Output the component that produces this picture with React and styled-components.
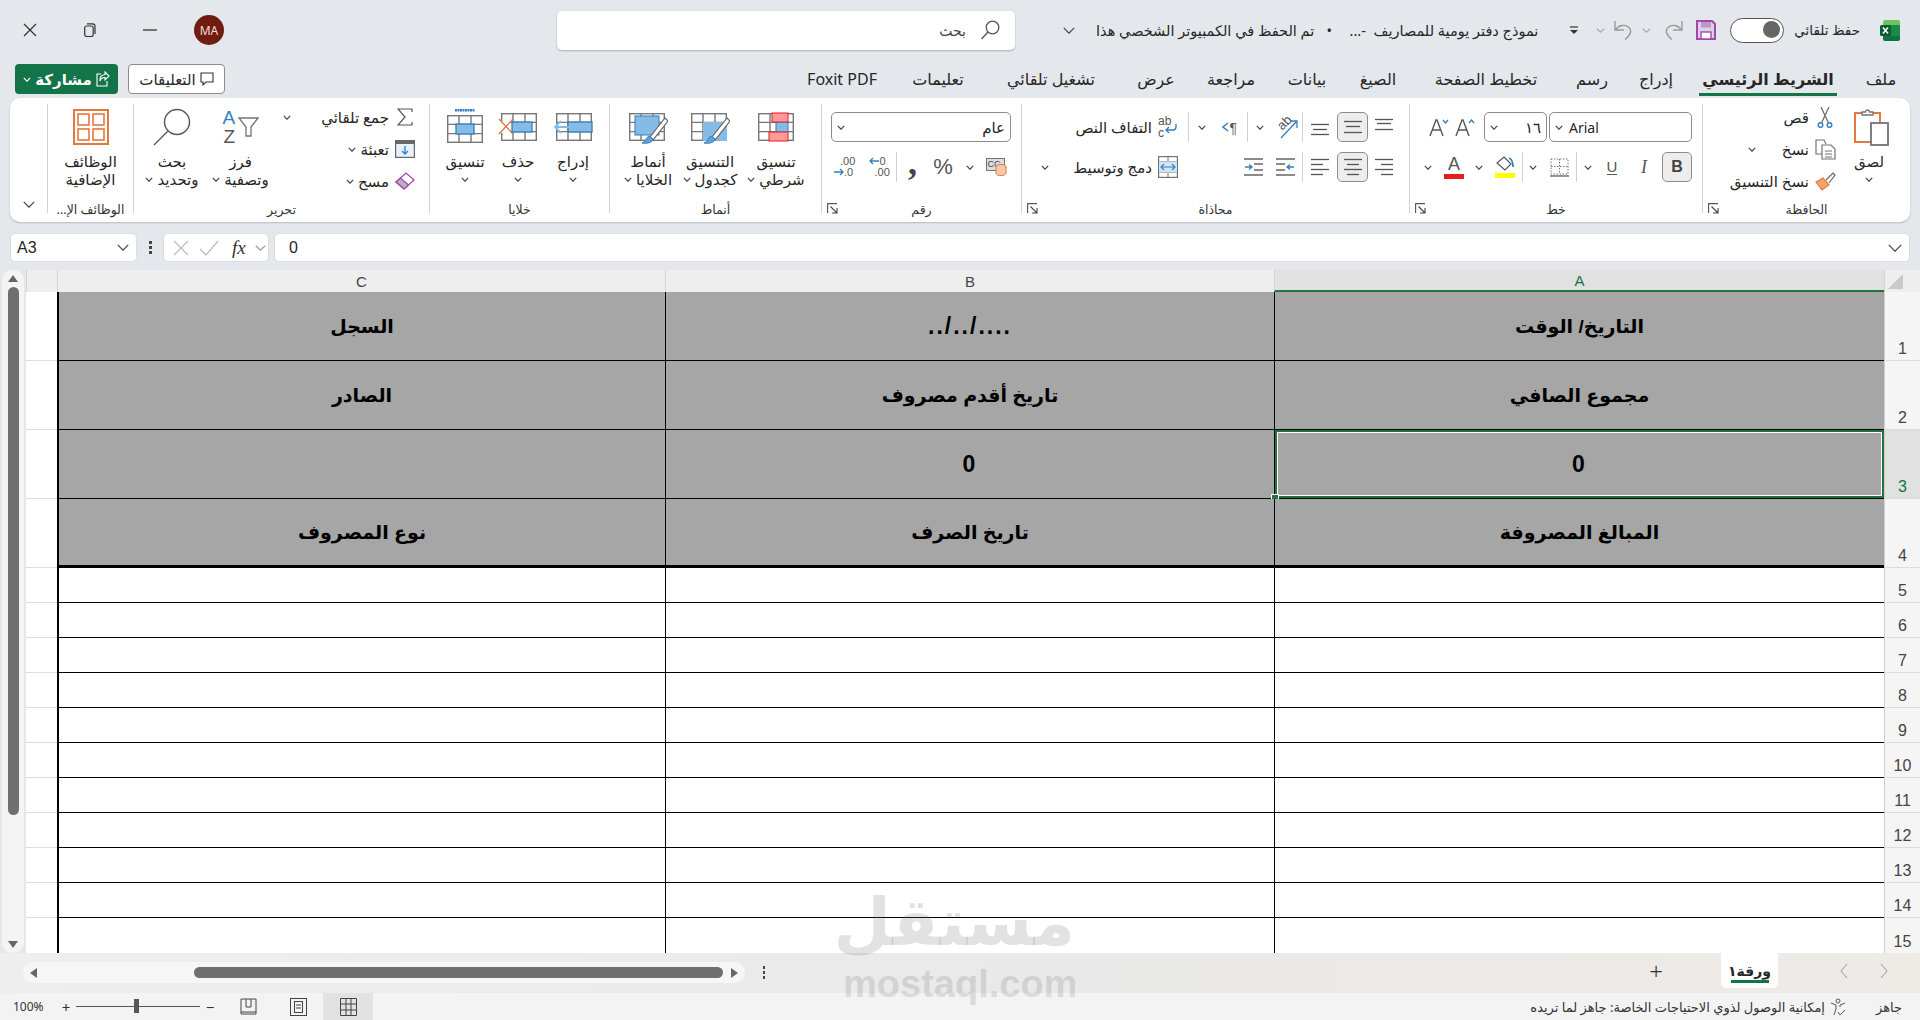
import React from "react";
import styled, { createGlobalStyle } from "styled-components";

const UI = `"Noto Sans", "DejaVu Sans", sans-serif`;
const ARIAL = `"Liberation Sans", "DejaVu Sans", sans-serif`;

const GREY = "#737373";
const BLUE = "#2f7fc1";
const SKY = "#86bbe6";
const ORANGE = "#e2793f";

const GlobalStyle = createGlobalStyle`
  html, body { margin: 0; padding: 0; background: #e4e8ed; }
  body { width: 1920px; height: 1020px; overflow: hidden; font-family: ${UI}; color: #262626; }
  * { box-sizing: border-box; }
`;

/* ---------- icons ---------- */

const Svg = styled.svg`
  display: block;
  flex: none;
`;

const I = ({ w, h, children }) => (
  <Svg width={w} height={h} viewBox={`0 0 ${w} ${h}`} fill="none">
    {children}
  </Svg>
);

const Chev = ({ w = 8, h = 5, c = "#444" }) => (
  <I w={w} h={h}>
    <path d={`M.8.8 ${w / 2} ${h - 0.8} ${w - 0.8}.8`} stroke={c} strokeWidth="1.2" />
  </I>
);

const CloseIcon = () => <I w={14} h={14}><path d="M1 1l12 12M13 1 1 13" stroke="#333" strokeWidth="1.2" /></I>;
const RestoreIcon = () => <I w={12} h={14}><rect x=".7" y="3" width="8.5" height="10.5" rx="2" stroke="#333" strokeWidth="1.2" /><path d="M3 .8h5.5a2.5 2.5 0 0 1 2.5 2.5V11" stroke="#333" strokeWidth="1.2" /></I>;
const MinIcon = () => <I w={14} h={2}><path d="M0 1h14" stroke="#333" strokeWidth="1.3" /></I>;
const SearchIcon = () => <I w={20} h={20}><circle cx="12.5" cy="7.5" r="6.3" stroke="#555" strokeWidth="1.3" /><path d="M8 12 1.5 19" stroke="#555" strokeWidth="1.4" /></I>;

const ExcelLogo = () => (
  <I w={20} h={21}>
    <rect x="3" y="0" width="17" height="11" rx="2" fill="#6fc15c" />
    <rect x="3" y="10" width="17" height="11" rx="2" fill="#10703f" />
    <rect x="9" y="5" width="11" height="11" fill="#1a8a4c" />
    <rect x="0" y="5" width="11" height="11" rx="1.5" fill="#0b5c33" />
    <path d="M3 7.6l5 6M8 7.6l-5 6" stroke="#fff" strokeWidth="1.5" />
  </I>
);

const SaveIcon = () => (
  <I w={20} h={20}>
    <path d="M1 1h15l3 3v15H1z" fill="#d9d4e4" stroke="#a347ab" strokeWidth="2" />
    <rect x="5" y="1.5" width="10" height="6" fill="#a347ab" opacity=".45" />
    <rect x="5" y="12" width="10" height="7" fill="#fff" stroke="#a347ab" strokeWidth="1.4" />
  </I>
);
const UndoIcon = () => <I w={20} h={20}><path d="M2 1v9h9M2.5 10C6 5 12 4 16 7.5c3 3 2 7-4 12" stroke="#999" strokeWidth="1.4" /></I>;
const RedoIcon = () => <I w={20} h={20}><path d="M18 1v9H9M17.5 10C14 5 8 4 4 7.5c-3 3-2 7 4 12" stroke="#999" strokeWidth="1.4" /></I>;
const CustomizeIcon = () => <I w={10} h={9}><path d="M1 1h8" stroke="#333" strokeWidth="1.2" /><path d="M1 4l4 4 4-4z" fill="#333" /></I>;

const CommentIcon = () => <I w={14} h={14}><path d="M1 1h12v9H6l-3 3v-3H1z" stroke="#333" strokeWidth="1.1" /></I>;
const ShareIcon = () => <I w={14} h={16}><path d="M9 1l4 4-4 4V6.5C6 6.5 4.5 8 4 10c-.3-3 1-6 5-6.5zM5 3H1v12h10v-5" stroke="#fff" strokeWidth="1.1" /></I>;

const PasteIcon = () => (
  <I w={42} h={38}>
    <g transform="translate(6 0)">
      <rect x="1" y="5" width="25" height="29" fill="#fff" stroke={ORANGE} strokeWidth="2" />
      <path d="M8 7V4h3.5a2 2 0 0 1 4 0H19v3z" fill="#fff" stroke={GREY} strokeWidth="1.3" />
      <rect x="17" y="15" width="17" height="22" fill="#fff" stroke={GREY} strokeWidth="1.8" />
    </g>
  </I>
);
const CutIcon = () => (
  <I w={16} h={21}>
    <path d="M12 0 4.5 16M4 0l7.5 16" stroke="#666" strokeWidth="1.2" />
    <circle cx="3.5" cy="18" r="2.3" stroke={BLUE} strokeWidth="1.4" />
    <circle cx="12.5" cy="18" r="2.3" stroke={BLUE} strokeWidth="1.4" />
  </I>
);
const CopyIcon = () => (
  <I w={21} h={21}>
    <path d="M9 15H1V1h8l2 4" stroke={GREY} strokeWidth="1.2" />
    <path d="M7 6h9l4 4v10H7z" fill="#fff" stroke={GREY} strokeWidth="1.2" />
    <path d="M10 12h7M10 15h7M10 18h7" stroke={GREY} />
  </I>
);
const PainterIcon = () => (
  <I w={21} h={19}>
    <path d="M1 10l7-4 6 7-7 5z" fill="#f2a56f" stroke={ORANGE} strokeWidth="1.2" />
    <path d="M11 8l7-7 2 2-6 8" fill="#fff" stroke="#666" strokeWidth="1.2" />
  </I>
);

const Launcher = ({ className }) => (
  <Svg className={className} width="11" height="11" viewBox="0 0 11 11" fill="none">
    <path d="M.6 10V.6H10" stroke="#555" strokeWidth="1.1" />
    <path d="M3.5 3.5 10 10M10 5v5H5" stroke="#444" strokeWidth="1.1" />
  </Svg>
);

const GrowIcon = ({ up }) => (
  <I w={20} h={19}>
    <path d="M1 18 7 2h1l6 16M3.5 12h8" stroke="#555" strokeWidth="1.4" />
    <path d={up ? "M14 5l2.5-3L19 5" : "M14 2l2.5 3L19 2"} stroke={BLUE} strokeWidth="1.3" />
  </I>
);

const FillColorIcon = () => (
  <I w={20} h={16}>
    <path d="M9 1l7 7-6 6-8-7z" fill="#fff" stroke="#555" strokeWidth="1.2" />
    <path d="M14 2c3 1 4 4 4 9" stroke={BLUE} strokeWidth="1.8" />
  </I>
);
const BordersIcon = () => (
  <I w={19} h={19}>
    <path d="M1 1h17v15H1zM9.5 1v15M1 8.5h17" stroke="#777" strokeDasharray="1.5 1.5" />
    <path d="M0 18h19" stroke="#666" strokeWidth="1.4" />
  </I>
);

const ALIGN_LINES = {
  top: [[0, 18, 1], [2, 16, 5], [0, 18, 11]],
  mid: [[0, 18, 3], [2, 16, 8], [0, 18, 14]],
  bottom: [[0, 18, 6], [2, 16, 11], [0, 18, 16]],
  right: [[0, 18, 1], [6, 18, 6], [0, 18, 11], [6, 18, 16]],
  center: [[0, 18, 1], [3, 15, 6], [0, 18, 11], [3, 15, 16]],
  left: [[0, 18, 1], [0, 12, 6], [0, 18, 11], [0, 12, 16]],
};
const AlignIcon = ({ kind }) => (
  <I w={18} h={18}>
    {ALIGN_LINES[kind].map(([a, b, y]) => (
      <path key={y} d={`M${a} ${y}.5H${b}`} stroke="#555" strokeWidth="1.3" />
    ))}
  </I>
);

/* icons that carry letters keep them as real text, with the drawing beside or over it */
const LetterBox = styled.div`
  position: relative;
  width: ${(p) => p.$w}px;
  height: ${(p) => p.$h}px;
  flex: none;
  direction: ltr;
  font-family: ${ARIAL};
  color: #555;
`;
const LetterAt = styled.span`
  position: absolute;
  left: ${(p) => p.$x}px;
  top: ${(p) => p.$y}px;
  font-size: ${(p) => p.$size}px;
  line-height: 1;
  color: ${(p) => p.$c || "inherit"};
  transform: ${(p) => (p.$turn ? `rotate(${p.$turn}deg)` : "none")};
`;
const DrawOver = styled.div`
  position: absolute;
  left: 0;
  top: 0;
`;

const OrientIcon = () => (
  <LetterBox $w={22} $h={24}>
    <LetterAt $x={1} $y={1} $size={13} $turn={-45}>ab</LetterAt>
    <DrawOver><I w={22} h={24}><path d="M5 23 20 7M14 6h7v7" stroke={BLUE} strokeWidth="1.3" /></I></DrawOver>
  </LetterBox>
);
const DirIcon = () => (
  <LetterBox $w={18} $h={15}>
    <LetterAt $x={8} $y={1} $size={14}>¶</LetterAt>
    <DrawOver><I w={8} h={14}><path d="M6 3 1 7l5 4" stroke={BLUE} strokeWidth="1.5" /></I></DrawOver>
  </LetterBox>
);
const IndentIcon = ({ flip }) => (
  <I w={19} h={18}>
    <path d={flip ? "M0 1h19M0 17h19M10 6h9M10 12h9" : "M0 1h19M0 17h19M0 6h9M0 12h9"} stroke="#666" strokeWidth="1.3" />
    <path d={flip ? "M1 9h6M5 6.5 8 9l-3 2.5" : "M18 9h-6M14 6.5 11 9l3 2.5"} stroke={BLUE} strokeWidth="1.3" />
  </I>
);
const WrapIcon = () => (
  <LetterBox $w={20} $h={24}>
    <LetterAt $x={0} $y={0} $size={12}>ab</LetterAt>
    <LetterAt $x={0} $y={12} $size={12}>c</LetterAt>
    <DrawOver><I w={20} h={24}><path d="M18 9v3a3 3 0 0 1-3 3H8M11 12l-3 3 3 3" stroke={BLUE} strokeWidth="1.3" /></I></DrawOver>
  </LetterBox>
);
const MergeIcon = () => (
  <I w={20} h={22}>
    <rect x=".6" y=".6" width="18.8" height="20.8" stroke={GREY} strokeWidth="1.2" />
    <path d="M0 6h20M0 16h20M10 1v4M10 17v4" stroke={GREY} />
    <rect x="1" y="6" width="18" height="10" fill="#cfe4f6" />
    <path d="M3 11h14M6 8l-3 3 3 3M14 8l3 3-3 3" stroke={BLUE} strokeWidth="1.1" />
  </I>
);
const CurrencyIcon = () => (
  <LetterBox $w={21} $h={18}>
    <DrawOver>
      <I w={21} h={18}>
        <rect x=".5" y=".5" width="18" height="12" fill="#ddd" stroke={GREY} />
      </I>
    </DrawOver>
    <LetterAt $x={2} $y={2} $size={9} $c="#444">CC</LetterAt>
    <DrawOver>
      <I w={21} h={18}>
        <ellipse cx="15" cy="9" rx="5" ry="2.5" fill="#f7c9a8" stroke={ORANGE} />
        <path d="M10 9v6c0 3.5 10 3.5 10 0V9" fill="#f7c9a8" stroke={ORANGE} />
      </I>
    </DrawOver>
  </LetterBox>
);
const DecIcon = ({ more }) => (
  <LetterBox $w={22} $h={22}>
    <LetterAt $x={more ? 7 : 12} $y={0} $size={11}>{more ? ".00" : "0"}</LetterAt>
    <LetterAt $x={more ? 11 : 7} $y={11} $size={11}>{more ? ".0" : ".00"}</LetterAt>
    <DrawOver>
      <I w={22} h={22}>
        {more
          ? <path d="M1 16h9M7 13l3 3-3 3" stroke={BLUE} strokeWidth="1.3" />
          : <path d="M11 5H2M5 2 2 5l3 3" stroke={BLUE} strokeWidth="1.3" />}
      </I>
    </DrawOver>
  </LetterBox>
);

const Tbl = ({ x = 0, y = 0, w = 36, h = 28 }) => (
  <g stroke="#777" strokeWidth="1.4">
    <rect x={x + 0.7} y={y + 0.7} width={w - 1.4} height={h - 1.4} />
    <path d={`M${x + w / 3} ${y}v${h}M${x + (2 * w) / 3} ${y}v${h}M${x} ${y + h / 3}h${w}M${x} ${y + (2 * h) / 3}h${w}`} />
  </g>
);
const Band = ({ x, y, w, h }) => <rect x={x} y={y} width={w} height={h} fill={SKY} stroke={BLUE} strokeWidth="1.3" />;
const Brush = () => (
  <g>
    <path d="M37 9 22 28l3 3L40 12z" fill="#fff" stroke="#666" strokeWidth="1.2" />
    <path d="M21 27c-3 1-2 5-7 7 6 1 11-1 11-4z" fill="#5ea4dc" stroke={BLUE} />
  </g>
);

const CondFormatIcon = () => (
  <I w={38} h={36}>
    <g transform="translate(1 4)"><Tbl /></g>
    <rect x="19" y="13" width="12" height="10" fill={SKY} stroke={BLUE} />
    <rect x="15" y="4" width="16" height="9" fill="#ff9a9a" stroke="#e81c1c" />
    <rect x="12" y="23" width="19" height="9" fill="#ff9a9a" stroke="#e81c1c" />
  </I>
);
const TableFormatIcon = () => (
  <I w={40} h={36}>
    <g transform="translate(1 4)"><Tbl /></g>
    <rect x="13" y="13" width="24" height="19" fill={SKY} />
    <Brush />
  </I>
);
const CellStyleIcon = () => (
  <I w={40} h={36}>
    <g transform="translate(1 4)"><Tbl /></g>
    <rect x="7" y="7" width="24" height="19" fill={SKY} stroke={BLUE} />
    <Brush />
  </I>
);
const InsertCellsIcon = () => (
  <I w={40} h={36}>
    <g transform="translate(3 4)"><Tbl /></g>
    <Band x={15} y={13} w={24} h={10} />
    <path d="M18 18H3M8 12l-6 6 6 6" stroke={SKY} strokeWidth="2" />
  </I>
);
const DeleteCellsIcon = () => (
  <I w={40} h={36}>
    <g transform="translate(3 4)"><Tbl /></g>
    <rect x="0" y="12" width="12" height="12" fill="#fff" />
    <Band x={14} y={13} w={20} h={10} />
    <path d="M1 10l14 15M15 10 1 25" stroke={ORANGE} strokeWidth="1.3" />
  </I>
);
const FormatCellsIcon = () => (
  <I w={38} h={36}>
    <path d="M9 1h20" stroke={BLUE} strokeWidth="3" strokeDasharray="2 .5" />
    <g transform="translate(1 6)"><Tbl /></g>
    <Band x={10} y={15} w={18} h={10} />
  </I>
);
const SigmaIcon = () => <I w={16} h={18}><path d="M15 4V1H1l7 8-7 8h14v-3" stroke="#555" strokeWidth="1.2" /></I>;
const FillDownIcon = () => (
  <I w={20} h={18}>
    <rect x=".6" y=".6" width="18.8" height="16.8" fill="#e8f1fa" stroke="#666" strokeWidth="1.2" />
    <path d="M1 2.5h18" stroke="#666" strokeWidth="3" />
    <path d="M10 6v8M7 11l3 3 3-3" stroke={BLUE} strokeWidth="1.3" />
  </I>
);
const EraserIcon = () => (
  <I w={20} h={18}>
    <path d="M1 10 11 1l8 7-10 9z" fill="#fff" stroke="#a347ab" strokeWidth="1.3" />
    <path d="M1 10l4.5-4 8 7L9 17z" fill="#b9b0c4" stroke="#a347ab" strokeWidth="1.3" />
  </I>
);
const SortIcon = () => (
  <LetterBox $w={36} $h={38}>
    <LetterAt $x={0} $y={0} $size={19} $c={BLUE}>A</LetterAt>
    <LetterAt $x={1} $y={19} $size={19}>Z</LetterAt>
    <DrawOver><I w={36} h={36}><path d="M16 10h19l-7 9v9h-5v-9z" fill="#fff" stroke={GREY} strokeWidth="1.3" /></I></DrawOver>
  </LetterBox>
);
const FindIcon = () => <I w={38} h={38}><circle cx="24" cy="14" r="12.5" stroke="#555" strokeWidth="1.4" /><path d="M15 23 1 37" stroke="#555" strokeWidth="1.3" /></I>;
const AddinsIcon = () => (
  <I w={36} h={36}>
    <rect x="1" y="1" width="34" height="34" stroke={ORANGE} strokeWidth="2" />
    <rect x="5" y="5" width="11" height="11" stroke={ORANGE} strokeWidth="1.6" />
    <rect x="20" y="5" width="11" height="11" stroke={ORANGE} strokeWidth="1.6" />
    <rect x="5" y="20" width="11" height="11" stroke={ORANGE} strokeWidth="1.6" />
    <rect x="20" y="20" width="11" height="11" stroke={ORANGE} strokeWidth="1.6" />
  </I>
);
const AccessIcon = () => (
  <I w={16} h={18}>
    <circle cx="8" cy="3" r="2" stroke="#555" />
    <path d="M1 5l5 2v4l-2 6M15 5l-5 2v2" stroke="#555" />
    <path d="M8 14l2 3 5-5" stroke="#555" />
  </I>
);
const PageBreakIcon = () => <I w={17} h={18}><path d="M1 1h15v15H1zM6 1v8h5V1M1 14h15" stroke="#444" /></I>;
const PageViewIcon = () => <I w={17} h={18}><rect x=".5" y=".5" width="16" height="17" stroke="#444" /><rect x="4.5" y="3.5" width="8" height="11" stroke="#444" /><path d="M6 7h5M6 10h5" stroke="#444" /></I>;
const NormalViewIcon = () => <I w={17} h={18}><path d="M.5.5h16v17H.5zM6 0v18M11 0v18M0 6h17M0 12h17" stroke="#444" /></I>;

/* ---------- title bar ---------- */

const TitleBar = styled.div`
  height: 58px;
  display: flex;
  align-items: center;
  padding: 2px 20px 0 0;
`;
const WindowBtn = styled.div`
  width: 60px;
  height: 30px;
  display: flex;
  align-items: center;
  justify-content: center;
`;
const Avatar = styled.div`
  width: 30px;
  height: 30px;
  margin-left: 14px;
  border-radius: 50%;
  background: #701c10;
  color: #f0dcd8;
  font-size: 12px;
  display: flex;
  align-items: center;
  justify-content: center;
`;
const SearchBox = styled.div`
  width: 458px;
  height: 39px;
  margin-left: 333px;
  background: #fff;
  border-radius: 5px;
  box-shadow: 0 1px 2px rgba(0, 0, 0, 0.25);
  display: flex;
  flex-direction: row-reverse;
  align-items: center;
  gap: 14px;
  padding: 0 15px;
  font-size: 14px;
  color: #444;
`;
const TitleRight = styled.div`
  flex: 1;
  display: flex;
  align-items: center;
  direction: rtl;
  font-size: 14.5px;
  white-space: nowrap;
`;
const ExcelSlot = styled.div`
  margin-left: 20px;
`;
const AutoSave = styled.span`
  font-size: 13.5px;
`;
const Toggle = styled.div`
  width: 54px;
  height: 25px;
  margin: 0 10px 0 14px;
  border: 1.5px solid #555;
  border-radius: 13px;
  background: #fff;
  position: relative;
  &::after {
    content: "";
    position: absolute;
    left: 32px;
    top: 2.5px;
    width: 17px;
    height: 17px;
    border-radius: 50%;
    background: #666;
  }
`;
const QuickSlot = styled.div`
  width: ${(p) => p.$w}px;
  display: flex;
  justify-content: center;
`;
const DocTitle = styled.span`
  width: 194px;
  margin-right: 16px;
`;
const Bullet = styled.span`
  width: 30px;
  text-align: center;
`;
const SavedState = styled.span`
  width: 232px;
`;

/* ---------- tabs ---------- */

const TabsRow = styled.div`
  height: 38px;
  display: flex;
  align-items: center;
  justify-content: space-between;
  padding: 4px 9px 0 15px;
`;
const ActionBtns = styled.div`
  display: flex;
  gap: 10px;
`;
const ShareBtn = styled.div`
  width: 103px;
  height: 30px;
  background: #13744a;
  border-radius: 4px;
  color: #fff;
  font-size: 15px;
  font-weight: 700;
  direction: rtl;
  display: flex;
  align-items: center;
  justify-content: center;
  gap: 4px;
`;
const CommentBtn = styled.div`
  width: 97px;
  height: 30px;
  background: #fff;
  border: 1px solid #8c8c8c;
  border-radius: 4px;
  font-size: 15px;
  direction: rtl;
  display: flex;
  align-items: center;
  justify-content: center;
  gap: 4px;
`;
const Tabs = styled.div`
  display: flex;
  direction: rtl;
`;
const Tab = styled.div`
  width: ${(p) => p.$w}px;
  height: 34px;
  display: flex;
  align-items: center;
  justify-content: center;
  font-size: 16px;
  white-space: nowrap;
  font-weight: ${(p) => (p.$active ? 700 : 400)};
  position: relative;
  ${(p) => p.$active && `
    &::after {
      content: "";
      position: absolute;
      bottom: 0;
      left: 14px;
      right: 14px;
      height: 3px;
      background: #13744a;
    }
  `}
`;

/* ---------- ribbon ---------- */

const Ribbon = styled.div`
  height: 124px;
  margin: 2px 10px 0;
  background: #fff;
  border-radius: 10px;
  box-shadow: 0 1px 2px rgba(0, 0, 0, 0.2);
  display: flex;
  direction: rtl;
`;
const Group = styled.div`
  width: ${(p) => p.$w}px;
  margin: 6px 0 9px;
  border-left: 1px solid #d2d2d2;
  display: flex;
  flex-direction: column;
  position: relative;
`;
const GroupBody = styled.div`
  height: 94px;
  flex: none;
  margin-top: -2px;
  padding-right: ${(p) => p.$pad || 0}px;
  display: flex;
`;
const GroupLabel = styled.div`
  height: 20px;
  flex: none;
  margin-top: 4px;
  text-align: center;
  font-size: 12.5px;
  line-height: 20px;
  color: #333;
  white-space: nowrap;
`;
const CornerLauncher = styled(Launcher)`
  position: absolute;
  left: 5px;
  bottom: -1px;
`;
const CollapseSlot = styled.div`
  width: 37px;
  display: flex;
  align-items: flex-end;
  justify-content: center;
  padding-bottom: 14px;
`;
const LargeBtn = styled.div`
  width: ${(p) => p.$w}px;
  padding-top: 6px;
  display: flex;
  flex-direction: column;
  align-items: center;
  font-size: 15px;
  line-height: 18px;
  white-space: nowrap;
`;
const LargeIcon = styled.div`
  height: 37px;
  margin-bottom: 7px;
  display: flex;
  align-items: center;
  justify-content: center;
`;
const TextLine = styled.div`
  display: flex;
  align-items: center;
  justify-content: center;
  gap: 4px;
  height: 18px;
`;
const SmallCol = styled.div`
  width: ${(p) => p.$w}px;
  display: flex;
  flex-direction: column;
  gap: 2px;
`;
const SmallBtn = styled.div`
  height: 30px;
  flex: 1;
  display: flex;
  align-items: center;
  gap: 4px;
  font-size: 15px;
  white-space: nowrap;
`;
const SmallIconSlot = styled.div`
  width: 24px;
  display: flex;
  justify-content: center;
  flex: none;
`;
const PushLeft = styled.div`
  margin-right: auto;
  padding-left: ${(p) => p.$pad || 0}px;
`;
const ToolRows = styled.div`
  width: ${(p) => (p.$w ? `${p.$w}px` : "auto")};
  flex: ${(p) => (p.$w ? "none" : 1)};
  padding-top: 10px;
  padding-right: ${(p) => p.$pad || 0}px;
  display: flex;
  flex-direction: column;
  gap: 10px;
`;
const ToolRow = styled.div`
  height: 30px;
  display: flex;
  align-items: center;
`;
const Slot = styled.div`
  width: ${(p) => p.$w}px;
  height: 30px;
  flex: none;
  display: flex;
  align-items: center;
  justify-content: center;
  font-family: ${ARIAL};
  border-left: ${(p) => (p.$sep ? "1px solid #d2d2d2" : "none")};
`;
const Pressed = styled(Slot)`
  background: #ededed;
  border: 1px solid #8c8c8c;
  border-radius: 5px;
`;
const Field = styled.div`
  width: ${(p) => p.$w}px;
  height: 30px;
  margin-left: ${(p) => p.$gap || 0}px;
  flex: none;
  border: 1px solid #8c8c8c;
  border-radius: 5px;
  display: flex;
  align-items: center;
  justify-content: ${(p) => (p.$end ? "flex-end" : "space-between")};
  gap: 6px;
  padding: 0 5px;
  font-size: 15px;
`;
const LatinValue = styled.span`
  direction: ltr;
  font-family: "Noto Sans", sans-serif;
  font-size: 14px;
`;
const BoldMark = styled.span`
  font-weight: 700;
  font-size: 16px;
  color: #444;
`;
const ItalicMark = styled.span`
  font-style: italic;
  font-family: "Liberation Serif", serif;
  font-size: 18px;
  color: #555;
`;
const UnderMark = styled.span`
  font-size: 15px;
  color: #555;
  border-bottom: 1.5px solid #555;
  line-height: 15px;
`;
const ColorA = styled.div`
  display: flex;
  flex-direction: column;
  align-items: center;
  font-size: 18px;
  line-height: 18px;
  color: #555;
`;
const ColorBar = styled.div`
  width: 20px;
  height: 5px;
  margin-top: ${(p) => p.$gap || 0}px;
  background: ${(p) => p.$c};
`;
const Percent = styled.span`
  font-size: 22px;
  color: #555;
`;
const Comma = styled.span`
  font-family: "Liberation Serif", serif;
  font-weight: 700;
  font-size: 36px;
  line-height: 20px;
  color: #444;
  margin-top: -10px;
`;

/* ---------- formula bar ---------- */

const FormulaBar = styled.div`
  height: 29px;
  margin-top: 11px;
  padding: 0 10px;
  display: flex;
  font-family: ${ARIAL};
`;
const NameBox = styled.div`
  width: 127px;
  background: #fff;
  border: 1px solid #dadde1;
  border-radius: 5px;
  display: flex;
  align-items: center;
  justify-content: space-between;
  padding: 0 7px 0 6px;
  font-size: 16px;
`;
const Dots = styled.div`
  width: 26px;
  display: flex;
  flex-direction: column;
  align-items: center;
  justify-content: center;
  gap: 2px;
  & i {
    width: 3px;
    height: 3px;
    background: #444;
  }
`;
const FxBox = styled.div`
  width: 106px;
  background: #fff;
  border: 1px solid #dadde1;
  border-radius: 5px;
  display: flex;
  align-items: center;
  gap: 9px;
  padding: 0 6px 0 8px;
  margin-right: 5px;
`;
const FxMark = styled.span`
  font-family: "Liberation Serif", serif;
  font-style: italic;
  font-size: 19px;
  color: #333;
  margin-left: 4px;
`;
const FormulaInput = styled.div`
  flex: 1;
  background: #fff;
  border: 1px solid #dadde1;
  border-radius: 5px;
  display: flex;
  align-items: center;
  justify-content: space-between;
  padding: 0 7px 0 14px;
  font-size: 16px;
`;

/* ---------- sheet ---------- */

const Sheet = styled.div`
  height: 683px;
  margin-top: 8px;
  display: flex;
  overflow: hidden;
`;
const VScroll = styled.div`
  width: 26px;
  padding: 0 2px;
`;
const VTrack = styled.div`
  height: 100%;
  border-radius: 10px;
  background: #f4f4f4;
  padding: 5px 5px;
  display: flex;
  flex-direction: column;
  align-items: center;
`;
const VThumb = styled.div`
  width: 11px;
  height: 528px;
  margin: 5px 0 auto;
  border-radius: 6px;
  background: #6e6f6e;
`;
const Arrow = styled.div`
  width: 0;
  height: 0;
  flex: none;
  border-left: ${(p) => (p.$dir === "left" ? "0" : p.$dir === "right" ? "7px solid #666" : "5px solid transparent")};
  border-right: ${(p) => (p.$dir === "right" ? "0" : p.$dir === "left" ? "7px solid #666" : "5px solid transparent")};
  border-top: ${(p) => (p.$dir === "down" ? "7px solid #666" : p.$dir === "up" ? "0" : "5px solid transparent")};
  border-bottom: ${(p) => (p.$dir === "up" ? "7px solid #666" : p.$dir === "down" ? "0" : "5px solid transparent")};
`;
const SheetGrid = styled.div`
  width: 1894px;
`;
const Row = styled.div`
  height: ${(p) => p.$h}px;
  display: grid;
  grid-template-columns: 31px 608px 609px 610px 36px;
`;
const ColHead = styled.div`
  background: ${(p) => (p.$on ? "#e1e1e1" : "#eeeeee")};
  color: ${(p) => (p.$on ? "#13744a" : "#444")};
  border-left: 1px solid #d4d4d4;
  border-bottom: ${(p) => (p.$on ? "2px solid #217346" : "none")};
  font-family: ${ARIAL};
  font-size: 15px;
  display: flex;
  align-items: center;
  justify-content: center;
`;
const Corner = styled(ColHead)`
  justify-content: flex-start;
  padding-left: 3px;
  & i {
    width: 0;
    height: 0;
    border-bottom: 15px solid #c9c9c9;
    border-left: 15px solid transparent;
  }
`;
const Blank = styled.div`
  background: #fff;
  border-bottom: 1px solid #dcdcdc;
`;
const Head = styled.div`
  background: #a6a6a6;
  border-left: ${(p) => (p.$edge ? "2px" : "1px")} solid #000;
  border-bottom: ${(p) => (p.$last ? "3px" : "1px")} solid #000;
  direction: rtl;
  font-family: ${ARIAL};
  font-weight: 700;
  font-size: ${(p) => (p.$num ? 23 : 19)}px;
  letter-spacing: ${(p) => (p.$num ? 2 : 0)}px;
  color: #000;
  display: flex;
  align-items: center;
  justify-content: center;
  position: relative;
  ${(p) => p.$sel && `
    box-shadow: inset 0 0 0 2px #217346, inset 0 0 0 3px #fff;
    &::after {
      content: "";
      position: absolute;
      left: -3px;
      bottom: -3px;
      width: 6px;
      height: 6px;
      background: #217346;
      outline: 1px solid #fff;
    }
  `}
`;
const Cell = styled.div`
  background: #fff;
  border-left: ${(p) => (p.$edge ? "2px" : "1px")} solid #000;
  border-bottom: 1px solid #000;
`;
const RowNum = styled.div`
  background: ${(p) => (p.$on ? "#e1e1e1" : "#f5f5f5")};
  color: ${(p) => (p.$on ? "#13744a" : "#444")};
  border-left: 1px solid #cfcfcf;
  border-bottom: 1px solid #dcdcdc;
  font-family: ${ARIAL};
  font-size: 16px;
  line-height: 18px;
  display: flex;
  align-items: flex-end;
  justify-content: center;
  padding-bottom: 2px;
`;

/* ---------- sheet tabs + status ---------- */

const TabBar = styled.div`
  height: 40px;
  padding-left: 23px;
  background: linear-gradient(90deg, #eeeeee 0%, #e9e9e9 55%, #eeeae6 100%);
  display: flex;
  align-items: flex-start;
`;
const HScroll = styled.div`
  width: 722px;
  height: 21px;
  margin-top: 9px;
  padding: 0 7px;
  background: #f6f6f6;
  border-radius: 10px;
  display: flex;
  align-items: center;
`;
const HThumb = styled.div`
  width: 529px;
  height: 11px;
  margin: 0 8px 0 auto;
  border-radius: 6px;
  background: #6e6f6e;
`;
const TabDots = styled(Dots)`
  height: 21px;
  margin-top: 9px;
  width: 38px;
  & i {
    width: 2px;
    height: 3px;
  }
`;
const TabRight = styled.div`
  flex: 1;
  display: flex;
  align-items: center;
  justify-content: flex-end;
  height: 35px;
  padding-right: 32px;
`;
const PlusBtn = styled.div`
  font-size: 24px;
  font-weight: 300;
  color: #333;
  line-height: 24px;
  margin-right: 58px;
`;
const SheetTab = styled.div`
  width: 57px;
  height: 35px;
  background: #fff;
  border-radius: 0 0 5px 5px;
  font-size: 14px;
  font-weight: 700;
  display: flex;
  align-items: center;
  justify-content: center;
  position: relative;
  margin-right: 62px;
  &::after {
    content: "";
    position: absolute;
    left: 10px;
    right: 9px;
    bottom: 5px;
    height: 3px;
    background: #13744a;
  }
`;
const NavChev = styled.div`
  margin-left: ${(p) => p.$gap || 0}px;
`;
const StatusBar = styled.div`
  height: 27px;
  background: #f3f3f3;
  padding: 0 18px 0 13px;
  display: flex;
  align-items: center;
  font-size: 12px;
  color: #333;
`;
const ZoomPct = styled.span`
  width: 43px;
`;
const ZoomSign = styled.span`
  width: 20px;
  font-size: 15px;
  text-align: center;
`;
const SliderTrack = styled.div`
  width: 124px;
  height: 1px;
  background: #555;
  position: relative;
  & i {
    position: absolute;
    left: 58px;
    top: -7px;
    width: 5px;
    height: 14px;
    background: #555;
  }
`;
const ViewBtn = styled.div`
  width: 50px;
  height: 27px;
  display: flex;
  align-items: center;
  justify-content: center;
  background: ${(p) => (p.$on ? "#e2e2e2" : "transparent")};
`;
const Views = styled.div`
  display: flex;
  margin-left: 3px;
`;
const StatusRight = styled.div`
  margin-left: auto;
  direction: rtl;
  display: flex;
  align-items: center;
  white-space: nowrap;
  font-size: 13px;
`;
const AccessWrap = styled.div`
  display: flex;
  align-items: center;
  gap: 5px;
  margin-right: 30px;
`;

const Watermark = styled.div`
  position: absolute;
  left: 843px;
  top: 882px;
  width: 232px;
  text-align: center;
  color: rgba(110, 110, 110, 0.2);
  font-family: ${ARIAL};
  font-weight: 700;
  pointer-events: none;
`;
const WatermarkAr = styled.div`
  font-size: 66px;
  line-height: 80px;
  padding-left: 10px;
  direction: rtl;
`;
const WatermarkEn = styled.div`
  font-size: 38px;
  line-height: 44px;
`;

/* ---------- data ---------- */

const TABS = [
  ["ملف", 60], ["الشريط الرئيسي", 166, true], ["إدراج", 58], ["رسم", 70], ["تخطيط الصفحة", 142],
  ["الصيغ", 74], ["بيانات", 68], ["مراجعة", 84], ["عرض", 66], ["تشغيل تلقائي", 144],
  ["تعليمات", 82], ["Foxit PDF", 110],
];

const HEAD_ROWS = [
  { n: 1, cells: ["السجل", "..../../..", "التاريخ/ الوقت"] },
  { n: 2, cells: ["الصادر", "تاريخ أقدم مصروف", "مجموع الصافي"] },
  { n: 3, cells: ["", "0", "0"], sel: true },
  { n: 4, cells: ["نوع المصروف", "تاريخ الصرف", "المبالغ المصروفة"], last: true },
];
const EMPTY_ROWS = [5, 6, 7, 8, 9, 10, 11, 12, 13, 14, 15];
const isNum = (t) => /^[0-9./]+$/.test(t);

function Big({ w, icon, lines, chev, chevLine }) {
  return (
    <LargeBtn $w={w}>
      <LargeIcon>{icon}</LargeIcon>
      {lines.map((t, i) => (
        <TextLine key={t}>
          {t}
          {chev && i === lines.length - 1 && <Chev />}
        </TextLine>
      ))}
      {chevLine && <TextLine><Chev /></TextLine>}
    </LargeBtn>
  );
}

function Small({ icon, label, chev, far }) {
  return (
    <SmallBtn>
      <SmallIconSlot>{icon}</SmallIconSlot>
      {label}
      {chev && !far && <Chev />}
      {far && <PushLeft $pad={far}><Chev /></PushLeft>}
    </SmallBtn>
  );
}

function RibbonBar() {
  return (
    <Ribbon>
      <Group $w={208}>
        <GroupBody $pad={9}>
          <Big w={64} icon={<PasteIcon />} lines={["لصق"]} chevLine />
          <SmallCol $w={126}>
            <Small icon={<CutIcon />} label="قص" />
            <Small icon={<CopyIcon />} label="نسخ" far={37} />
            <Small icon={<PainterIcon />} label="نسخ التنسيق" />
          </SmallCol>
        </GroupBody>
        <GroupLabel>الحافظة</GroupLabel>
        <CornerLauncher />
      </Group>

      <Group $w={293}>
        <GroupBody $pad={10}>
          <ToolRows>
            <ToolRow>
              <Field $w={143} $gap={2} $end><LatinValue>Arial</LatinValue><Chev /></Field>
              <Field $w={63} $gap={6}><span>١٦</span><Chev /></Field>
              <Slot $w={26}><GrowIcon up /></Slot>
              <Slot $w={26}><GrowIcon /></Slot>
            </ToolRow>
            <ToolRow>
              <Pressed $w={30}><BoldMark>B</BoldMark></Pressed>
              <Slot $w={36}><ItalicMark>I</ItalicMark></Slot>
              <Slot $w={28}><UnderMark>U</UnderMark></Slot>
              <Slot $w={22} $sep><Chev /></Slot>
              <Slot $w={34}><BordersIcon /></Slot>
              <Slot $w={20} $sep><Chev /></Slot>
              <Slot $w={34}><ColorA><FillColorIcon /><ColorBar $c="#ffff00" $gap={1} /></ColorA></Slot>
              <Slot $w={18}><Chev /></Slot>
              <Slot $w={32}><ColorA>A<ColorBar $c="#e81c1c" $gap={1} /></ColorA></Slot>
              <Slot $w={20}><Chev /></Slot>
            </ToolRow>
          </ToolRows>
        </GroupBody>
        <GroupLabel>خط</GroupLabel>
        <CornerLauncher />
      </Group>

      <Group $w={388}>
        <GroupBody $pad={9}>
          <ToolRows $w={212}>
            <ToolRow>
              <Slot $w={32}><AlignIcon kind="top" /></Slot>
              <Pressed $w={31}><AlignIcon kind="mid" /></Pressed>
              <Slot $w={35} $sep><AlignIcon kind="bottom" /></Slot>
              <Slot $w={30}><OrientIcon /></Slot>
              <Slot $w={25} $sep><Chev /></Slot>
              <Slot $w={33}><DirIcon /></Slot>
              <Slot $w={26} $sep><Chev /></Slot>
            </ToolRow>
            <ToolRow>
              <Slot $w={32}><AlignIcon kind="right" /></Slot>
              <Pressed $w={31}><AlignIcon kind="center" /></Pressed>
              <Slot $w={35} $sep><AlignIcon kind="left" /></Slot>
              <Slot $w={33}><IndentIcon /></Slot>
              <Slot $w={32}><IndentIcon flip /></Slot>
            </ToolRow>
          </ToolRows>
          <ToolRows $pad={8}>
            <ToolRow>
              <Small icon={<WrapIcon />} label="التفاف النص" />
            </ToolRow>
            <ToolRow>
              <Small icon={<MergeIcon />} label="دمج وتوسيط" far={19} />
            </ToolRow>
          </ToolRows>
        </GroupBody>
        <GroupLabel>محاذاة</GroupLabel>
        <CornerLauncher />
      </Group>

      <Group $w={200}>
        <GroupBody $pad={10}>
          <ToolRows>
            <ToolRow>
              <Field $w={180}><span>عام</span><Chev /></Field>
            </ToolRow>
            <ToolRow>
              <Slot $w={30}><CurrencyIcon /></Slot>
              <Slot $w={23}><Chev /></Slot>
              <Slot $w={30}><Percent>%</Percent></Slot>
              <Slot $w={32} $sep><Comma>,</Comma></Slot>
              <Slot $w={35}><DecIcon /></Slot>
              <Slot $w={34}><DecIcon more /></Slot>
            </ToolRow>
          </ToolRows>
        </GroupBody>
        <GroupLabel>رقم</GroupLabel>
        <CornerLauncher />
      </Group>

      <Group $w={212}>
        <GroupBody $pad={9}>
          <Big w={72} icon={<CondFormatIcon />} lines={["تنسيق", "شرطي"]} chev />
          <Big w={60} icon={<TableFormatIcon />} lines={["التنسيق", "كجدول"]} chev />
          <Big w={64} icon={<CellStyleIcon />} lines={["أنماط", "الخلايا"]} chev />
        </GroupBody>
        <GroupLabel>أنماط</GroupLabel>
      </Group>

      <Group $w={180}>
        <GroupBody>
          <Big w={72} icon={<InsertCellsIcon />} lines={["إدراج"]} chevLine />
          <Big w={38} icon={<DeleteCellsIcon />} lines={["حذف"]} chevLine />
          <Big w={68} icon={<FormatCellsIcon />} lines={["تنسيق"]} chevLine />
        </GroupBody>
        <GroupLabel>خلايا</GroupLabel>
      </Group>

      <Group $w={296}>
        <GroupBody $pad={12}>
          <SmallCol $w={142}>
            <Small icon={<SigmaIcon />} label="جمع تلقائي" far={8} />
            <Small icon={<FillDownIcon />} label="تعبئة" chev />
            <Small icon={<EraserIcon />} label="مسح" chev />
          </SmallCol>
          <Big w={69} icon={<SortIcon />} lines={["فرز", "وتصفية"]} chev />
          <Big w={68} icon={<FindIcon />} lines={["بحث", "وتحديد"]} chev />
        </GroupBody>
        <GroupLabel>تحرير</GroupLabel>
      </Group>

      <Group $w={86}>
        <GroupBody>
          <Big w={85} icon={<AddinsIcon />} lines={["الوظائف", "الإضافية"]} />
        </GroupBody>
        <GroupLabel>الوظائف الإ...</GroupLabel>
      </Group>

      <CollapseSlot><Chev w={12} h={7} /></CollapseSlot>
    </Ribbon>
  );
}

function Grid() {
  return (
    <SheetGrid>
      <Row $h={22}>
        <ColHead />
        <ColHead>C</ColHead>
        <ColHead>B</ColHead>
        <ColHead $on>A</ColHead>
        <Corner><i /></Corner>
      </Row>
      {HEAD_ROWS.map((r) => (
        <Row key={r.n} $h={69}>
          <Blank />
          <Head $edge $last={r.last} $num={isNum(r.cells[0])}>{r.cells[0]}</Head>
          <Head $last={r.last} $num={isNum(r.cells[1])}>{r.cells[1]}</Head>
          <Head $last={r.last} $num={isNum(r.cells[2])} $sel={r.sel}>{r.cells[2]}</Head>
          <RowNum $on={r.sel}>{r.n}</RowNum>
        </Row>
      ))}
      {EMPTY_ROWS.map((n) => (
        <Row key={n} $h={n === 15 ? 36 : 35}>
          <Blank />
          <Cell $edge />
          <Cell />
          <Cell />
          <RowNum>{n}</RowNum>
        </Row>
      ))}
    </SheetGrid>
  );
}

export default function App() {
  return (
    <>
      <GlobalStyle />
      <TitleBar>
        <WindowBtn><CloseIcon /></WindowBtn>
        <WindowBtn><RestoreIcon /></WindowBtn>
        <WindowBtn><MinIcon /></WindowBtn>
        <Avatar>MA</Avatar>
        <SearchBox><SearchIcon />بحث</SearchBox>
        <TitleRight>
          <ExcelSlot><ExcelLogo /></ExcelSlot>
          <AutoSave>حفظ تلقائي</AutoSave>
          <Toggle />
          <QuickSlot $w={20}><SaveIcon /></QuickSlot>
          <QuickSlot $w={44}><RedoIcon /></QuickSlot>
          <QuickSlot $w={12}><Chev w={9} h={5} c="#aaa" /></QuickSlot>
          <QuickSlot $w={34}><UndoIcon /></QuickSlot>
          <QuickSlot $w={12}><Chev w={9} h={5} c="#aaa" /></QuickSlot>
          <QuickSlot $w={40}><CustomizeIcon /></QuickSlot>
          <DocTitle>نموذج دفتر يومية للمصاريف&nbsp; -...</DocTitle>
          <Bullet>•</Bullet>
          <SavedState>تم الحفظ في الكمبيوتر الشخصي هذا</SavedState>
          <QuickSlot $w={26}><Chev w={12} h={7} /></QuickSlot>
        </TitleRight>
      </TitleBar>

      <TabsRow>
        <ActionBtns>
          <ShareBtn><ShareIcon />مشاركة<Chev c="#fff" /></ShareBtn>
          <CommentBtn><CommentIcon />التعليقات</CommentBtn>
        </ActionBtns>
        <Tabs>
          {TABS.map(([label, w, active]) => (
            <Tab key={label} $w={w} $active={active}>{label}</Tab>
          ))}
        </Tabs>
      </TabsRow>

      <RibbonBar />

      <FormulaBar>
        <NameBox>A3<Chev w={12} h={7} /></NameBox>
        <Dots><i /><i /><i /></Dots>
        <FxBox>
          <I w={18} h={18}><path d="M2 2l14 14M16 2 2 16" stroke="#bbb" strokeWidth="1.2" /></I>
          <I w={20} h={16}><path d="M1 9l6 6L19 1" stroke="#bbb" strokeWidth="1.2" /></I>
          <FxMark>fx</FxMark>
          <Chev w={11} h={6} c="#999" />
        </FxBox>
        <FormulaInput>0<Chev w={14} h={8} /></FormulaInput>
      </FormulaBar>

      <Sheet>
        <VScroll>
          <VTrack>
            <Arrow $dir="up" />
            <VThumb />
            <Arrow $dir="down" />
          </VTrack>
        </VScroll>
        <Grid />
      </Sheet>

      <TabBar>
        <HScroll>
          <Arrow $dir="left" />
          <HThumb />
          <Arrow $dir="right" />
        </HScroll>
        <TabDots><i /><i /><i /></TabDots>
        <TabRight>
          <PlusBtn>+</PlusBtn>
          <SheetTab>ورقة١</SheetTab>
          <NavChev><I w={8} h={16}><path d="M7 1 1 8l6 7" stroke="#999" /></I></NavChev>
          <NavChev $gap={32}><I w={8} h={16}><path d="M1 1l6 7-6 7" stroke="#999" /></I></NavChev>
        </TabRight>
      </TabBar>

      <StatusBar>
        <ZoomPct>100%</ZoomPct>
        <ZoomSign>+</ZoomSign>
        <SliderTrack><i /></SliderTrack>
        <ZoomSign>−</ZoomSign>
        <Views>
          <ViewBtn><PageBreakIcon /></ViewBtn>
          <ViewBtn><PageViewIcon /></ViewBtn>
          <ViewBtn $on><NormalViewIcon /></ViewBtn>
        </Views>
        <StatusRight>
          جاهز
          <AccessWrap><AccessIcon />إمكانية الوصول لذوي الاحتياجات الخاصة: جاهز لما تريده</AccessWrap>
        </StatusRight>
      </StatusBar>

      <Watermark>
        <WatermarkAr>مستقل</WatermarkAr>
        <WatermarkEn>mostaql.com</WatermarkEn>
      </Watermark>
    </>
  );
}
